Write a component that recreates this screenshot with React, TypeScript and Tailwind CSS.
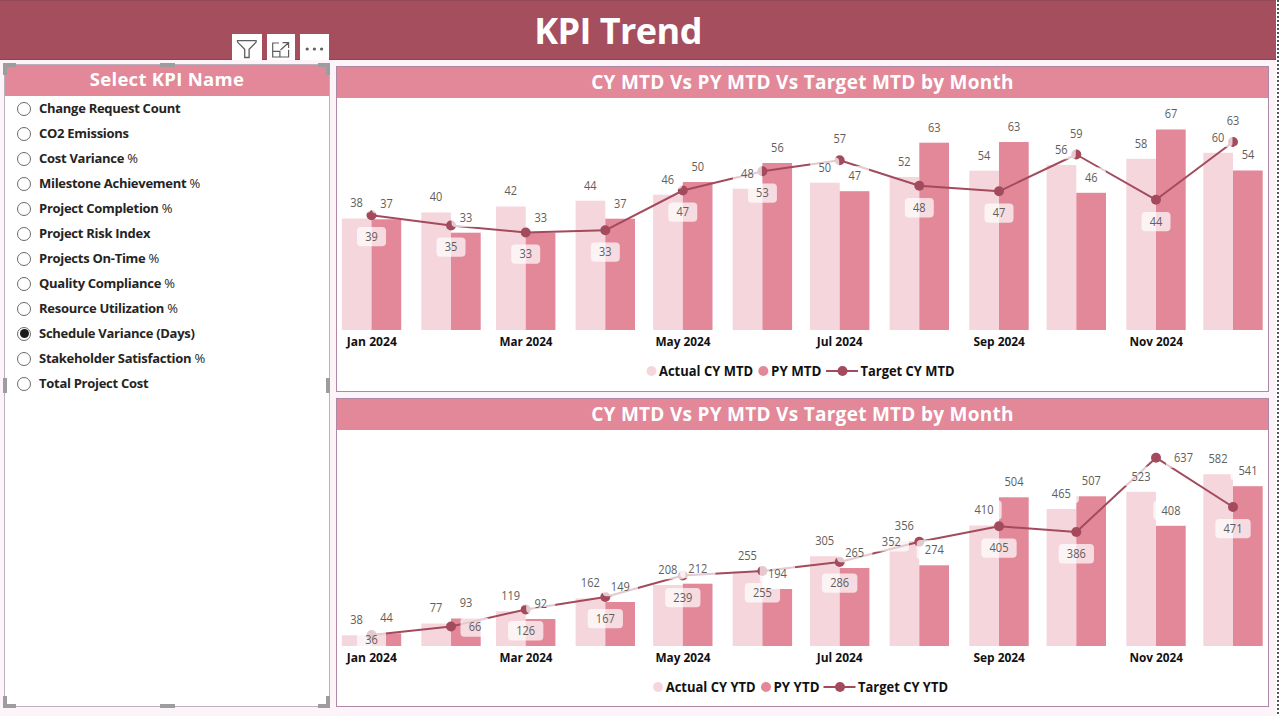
import clsx from 'clsx';

type Label = { text: string; x: number; y: number };

type Month = {
  x: number;
  // top edge of each column and the height of the line point
  cyTop: number;
  pyTop: number;
  target: number;
  labels: [Label, Label, Label];
};

const centers = [371.5, 451, 525.7, 605.3, 682.8, 762.4, 839.7, 919.3, 999, 1076.3, 1156, 1233];

const axis = [
  { text: 'Jan 2024', x: 371.8, width: 50 },
  { text: 'Mar 2024', x: 526, width: 53 },
  { text: 'May 2024', x: 683, width: 55 },
  { text: 'Jul 2024', x: 839.7, width: 46 },
  { text: 'Sep 2024', x: 999.2, width: 51.5 },
  { text: 'Nov 2024', x: 1156.2, width: 53.5 },
];

// [cy, py, target, cyTop, pyTop, targetY, targetLabelX offset, targetLabelY]
type Row = [number, number, number, number, number, number, number, number];

const mtd: Row[] = [
  [38, 37, 39, 218.5, 219.3, 215.2, 0, 236.5],
  [40, 33, 35, 212.5, 232.7, 225.5, 0, 247],
  [42, 33, 33, 206.5, 232.7, 232.5, 0, 254],
  [44, 37, 33, 200.7, 218.7, 230.3, 0, 252],
  [46, 50, 47, 194.7, 182, 190.5, 0, 212],
  [48, 56, 53, 188.7, 163, 171.3, 0, 193],
  [50, 47, 57, 182.7, 191.2, 160.3, 0, 138.5],
  [52, 63, 48, 177, 142.7, 185.8, 0, 207.7],
  [54, 63, 47, 170.7, 142, 191.3, 0, 213],
  [56, 46, 59, 165, 192.8, 154.5, 0, 133.5],
  [58, 67, 44, 158.8, 129.5, 199.8, 0, 221.5],
  [60, 54, 63, 152.8, 170.5, 142, 0, 121],
];

const ytd: Row[] = [
  [38, 44, 36, 635.3, 633.3, 635, 0, 639.5],
  [77, 93, 66, 623.5, 618.5, 626.5, 24, 627],
  [119, 92, 126, 611.3, 619, 609.5, 0, 630.7],
  [162, 149, 167, 598.5, 602, 597, 0, 618.5],
  [208, 212, 239, 585, 583.7, 575.5, 0, 597.5],
  [255, 194, 255, 571.5, 589, 571, 0, 592.7],
  [305, 265, 286, 556.2, 568, 562, 0, 583],
  [356, 274, 352, 541, 565.3, 541.8, -28, 541.8],
  [410, 504, 405, 525.5, 497.3, 526.3, 0, 548],
  [465, 507, 386, 509, 496.3, 532, 0, 553.7],
  [523, 408, 637, 491.8, 525.8, 457.7, 27.5, 458],
  [582, 541, 471, 474.2, 486.2, 507, 0, 528.5],
];

function toMonths(rows: Row[]): Month[] {
  return rows.map(([cy, py, target, cyTop, pyTop, targetY, dx, labelY], i) => {
    const x = centers[i];
    return {
      x,
      cyTop,
      pyTop,
      target: targetY,
      labels: [
        { text: String(cy), x: x - 15, y: cyTop - 15.6 },
        { text: String(py), x: x + 15, y: pyTop - 15.6 },
        { text: String(target), x: x + dx, y: labelY },
      ],
    };
  });
}

type LegendItem = { text: string; dot: number; x: number; width: number };

type ChartProps = {
  months: Month[];
  top: number;
  height: number;
  base: number;
  legendY: number;
  legend: [LegendItem, LegendItem, LegendItem];
};

function Chart({ months, top, height, base, legendY, legend }: ChartProps) {
  const colors = ['#f5d6dd', '#e28899', '#a34b5d'];
  return (
    <svg
      className="block w-full font-['Open_Sans',sans-serif]"
      height={height}
      viewBox={`337 ${top} 931 ${height}`}
      preserveAspectRatio="none"
    >
      {months.map((m) => (
        <g key={m.x}>
          <rect x={m.x - 29.7} y={m.cyTop} width={29.7} height={base - m.cyTop} fill="#f5d6dd" />
          <rect x={m.x} y={m.pyTop} width={29.7} height={base - m.pyTop} fill="#e28899" />
        </g>
      ))}
      <polyline
        points={months.map((m) => `${m.x},${m.target}`).join(' ')}
        fill="none"
        stroke="#a34b5d"
        strokeWidth={2}
        strokeLinejoin="round"
      />
      {months.map((m) => (
        <circle key={m.x} cx={m.x} cy={m.target} r={5} fill="#a34b5d" />
      ))}
      {months.flatMap((m) => m.labels).map((l, i) => {
        const w = l.text.length === 2 ? 29 : 35.3;
        const tw = l.text.length === 2 ? 12.6 : 19;
        return (
          <g key={i}>
            <rect x={l.x - w / 2} y={l.y - 9.6} width={w} height={19.4} rx={4} fill="#fff" fillOpacity={0.7} />
            <text
              x={l.x - tw / 2}
              y={l.y + 4.4}
              fontSize={12}
              fill="#605e5c"
              textLength={tw}
              lengthAdjust="spacingAndGlyphs"
            >
              {l.text}
            </text>
          </g>
        );
      })}
      {axis.map((a) => (
        <text
          key={a.text}
          x={a.x - a.width / 2}
          y={base + 16.4}
          fontSize={12}
          fontWeight={700}
          fill="#111"
          textLength={a.width}
          lengthAdjust="spacingAndGlyphs"
        >
          {a.text}
        </text>
      ))}
      {legend.map((item, i) => (
        <g key={item.text}>
          {i === 2 && (
            <line x1={item.dot - 16.5} x2={item.dot + 15.5} y1={legendY} y2={legendY} stroke="#a34b5d" strokeWidth={2} />
          )}
          <circle cx={item.dot} cy={legendY} r={5} fill={colors[i]} />
          <text
            x={item.x}
            y={legendY + 5}
            fontSize={13.5}
            fontWeight={700}
            fill="#111"
            textLength={item.width}
            lengthAdjust="spacingAndGlyphs"
          >
            {item.text}
          </text>
        </g>
      ))}
    </svg>
  );
}

const kpis = [
  'Change Request Count',
  'CO2 Emissions',
  'Cost Variance %',
  'Milestone Achievement %',
  'Project Completion %',
  'Project Risk Index',
  'Projects On-Time %',
  'Quality Compliance %',
  'Resource Utilization %',
  'Schedule Variance (Days)',
  'Stakeholder Satisfaction %',
  'Total Project Cost',
];

function KpiOption({ name, selected }: { name: string; selected: boolean }) {
  const percent = name.endsWith('%');
  return (
    <li className="flex h-[25px] items-center gap-2">
      <span className="flex size-[14px] shrink-0 items-center justify-center rounded-full border border-[#6b6b6b] bg-white">
        {selected && <span className="size-[9px] rounded-full bg-[#1b1b1b]" />}
      </span>
      <span className="whitespace-nowrap text-[13px] font-bold tracking-[-0.28px] text-[#252423]">
        {percent ? name.slice(0, -1) : name}
        {percent && <span className="font-medium">%</span>}
      </span>
    </li>
  );
}

function Handle({ className }: { className: string }) {
  return <span className={clsx('absolute border-[#9d9d9d]', className)} />;
}

function VisualToolbar() {
  return (
    <div className="absolute top-[34px] left-[232px] flex gap-[5px]">
      <button className="h-[26px] w-[29.5px] bg-white">
        <svg className="block" width="29" height="26" viewBox="0 0 29 26" fill="none" stroke="#605e5c" strokeWidth="1.3">
          <path d="M5.5 6.6h18.6v1.5l-7 7.2v8.2h-4.4v-8.2l-7.2-7.2z" />
        </svg>
      </button>
      <button className="h-[26px] w-[28.5px] bg-white">
        <svg className="block" width="29" height="26" viewBox="0 0 29 26" fill="none" stroke="#605e5c" strokeWidth="1.2">
          <path d="M12 9H5.7v14h15.9v-7.3M5.7 17.3h7.2v5.6M13.5 16l8-7.3M15.5 8.6h6.1v5.5" />
        </svg>
      </button>
      <button className="h-[26px] w-[29px] bg-white">
        <svg className="block" width="29" height="26" viewBox="0 0 29 26" fill="#605e5c">
          <circle cx="7.2" cy="15" r="1.6" />
          <circle cx="14.4" cy="15" r="1.6" />
          <circle cx="21.6" cy="15" r="1.6" />
        </svg>
      </button>
    </div>
  );
}

const chartTitle =
  'flex h-[31px] items-center justify-center bg-[#e28899] text-[19px] font-bold leading-none tracking-[0.28px] text-white';

export default function App() {
  return (
    <div className="relative flex h-[716px] w-[1280px] overflow-hidden bg-[#fdf4f9] font-['Open_Sans',sans-serif]">
      <div className="flex w-[1276px] flex-col">
        <header className="flex h-[60px] shrink-0 items-center justify-center border-t border-b border-t-[#93495a] border-b-[#7d4663] bg-[#a54e5e] pr-[40px]">
          <h1 className="whitespace-nowrap pt-[1px] text-[36px] font-bold leading-none tracking-[-0.55px] text-white">
            KPI Trend
          </h1>
        </header>

        <main className="flex gap-[6px] pt-1 pl-1">
          <section className="relative h-[643px] w-[326px] border border-[#bdb0bd] bg-white">
            <h2 className="flex h-[31px] items-center justify-center bg-[#e28899] pb-[2px] text-[18.5px] font-bold leading-none tracking-[0.28px] text-white">
              Select KPI Name
            </h2>
            <ul className="pl-3">
              {kpis.map((name) => (
                <KpiOption key={name} name={name} selected={name === 'Schedule Variance (Days)'} />
              ))}
            </ul>
            <Handle className="-top-[2px] -left-[2px] h-3 w-[13px] border-t-4 border-l-4" />
            <Handle className="-top-[2px] -right-[1px] h-3 w-[12px] border-t-4 border-r-4" />
            <Handle className="-bottom-[2px] -left-[2px] h-3 w-[13px] border-b-4 border-l-4" />
            <Handle className="-right-[1px] -bottom-[2px] h-3 w-[12px] border-r-4 border-b-4" />
            <Handle className="-top-[2px] left-[155px] w-[15px] border-t-4" />
            <Handle className="-bottom-[2px] left-[155px] w-[15px] border-t-4" />
            <Handle className="top-[313px] -left-[2px] h-[15px] border-l-4" />
            <Handle className="top-[313px] -right-[1px] h-[15px] border-l-4" />
          </section>

          <div className="flex w-[933px] flex-col gap-[6px] pt-[2px]">
            <section className="h-[326px] border border-[#ae88a4] bg-white">
              <h2 className={chartTitle}>CY MTD Vs PY MTD Vs Target MTD by Month</h2>
              <Chart
                months={toMonths(mtd)}
                top={98}
                height={293}
                base={330}
                legendY={371}
                legend={[
                  { text: 'Actual CY MTD', dot: 651.5, x: 659, width: 94 },
                  { text: 'PY MTD', dot: 763.3, x: 771, width: 50.5 },
                  { text: 'Target CY MTD', dot: 842.5, x: 860.5, width: 94 },
                ]}
              />
            </section>
            <section className="h-[309px] border border-[#ae88a4] bg-white">
              <h2 className={chartTitle}>CY MTD Vs PY MTD Vs Target MTD by Month</h2>
              <Chart
                months={toMonths(ytd)}
                top={430}
                height={276}
                base={646}
                legendY={687}
                legend={[
                  { text: 'Actual CY YTD', dot: 658, x: 665.7, width: 90 },
                  { text: 'PY YTD', dot: 766, x: 773.5, width: 46 },
                  { text: 'Target CY YTD', dot: 840, x: 858, width: 90 },
                ]}
              />
            </section>
          </div>
        </main>
      </div>

      <div className="flex-1 bg-white pl-[1px]">
        <div className="h-full w-[2px] bg-[repeating-linear-gradient(to_bottom,#555_0_2px,#fff_2px_4px)]" />
      </div>
      <VisualToolbar />
    </div>
  );
}
